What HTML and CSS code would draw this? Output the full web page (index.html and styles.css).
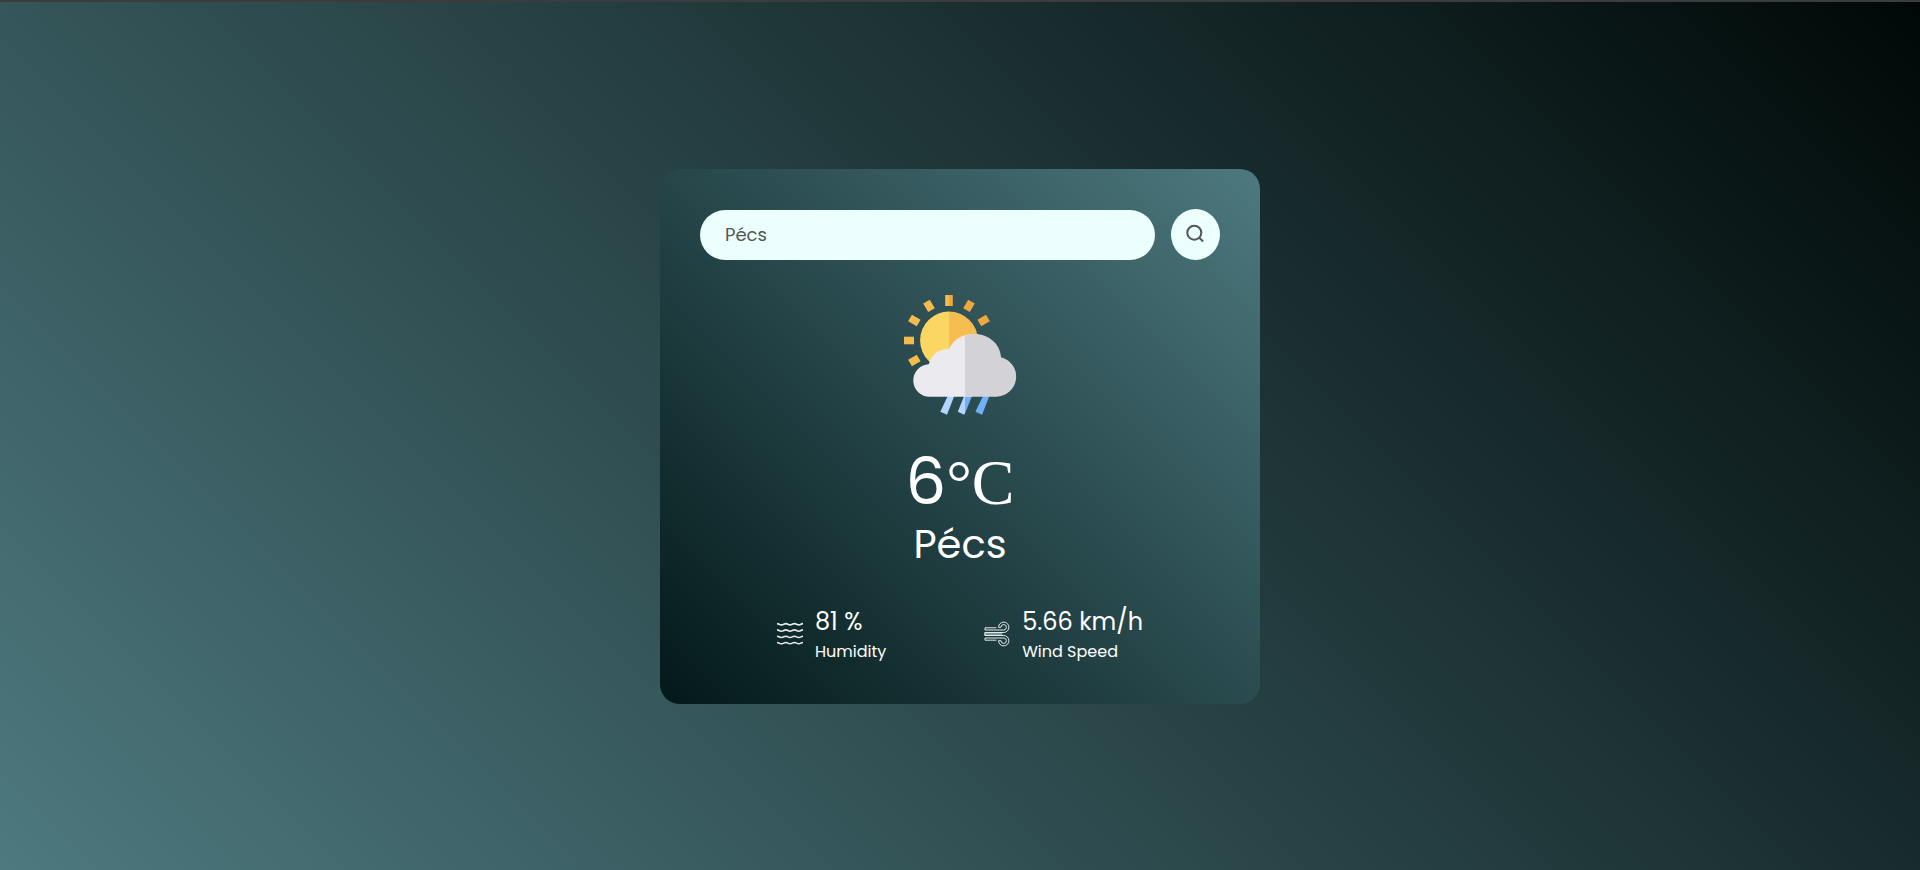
FILE: index.html
```html
<!DOCTYPE html>
<html lang="en">
<head>
<meta charset="utf-8">
<meta name="viewport" content="width=device-width, initial-scale=1">
<title>Weather</title>
<link rel="stylesheet" href="styles.css">
</head>
<body>
<main class="card">
  <form class="search">
    <input class="search-input" type="text" value="Pécs" aria-label="City name" spellcheck="false">
    <button class="search-button" type="button" aria-label="Search">
      <svg class="search-icon" viewBox="0 0 18 18" aria-hidden="true"><circle cx="7.300" cy="7.700" r="7"/><path d="M12.300 12.700l3.800 3.800"/></svg>
    </button>
  </form>
  <section class="weather">
    <svg class="weather-icon" viewBox="0 0 120 120" role="img" aria-label="Sun, cloud and rain">
      <g fill="#f5bb4f">
        <path d="M45.200 0H49V11H45.200z"/>
        <path id="ray" d="M4 41.700h10v7.600H4z"/>
        <use href="#ray" transform="rotate(-30 49 45.500)"/>
        <use href="#ray" transform="rotate(30 49 45.500)"/>
        <use href="#ray" transform="rotate(60 49 45.500)"/>
      </g>
      <g fill="#f0a73e">
        <path d="M49 0h3.800v11H49z"/>
        <path d="M4 41.700h10v7.600H4z" transform="rotate(120 49 45.500)"/>
        <path d="M4 41.700h10v7.600H4z" transform="rotate(150 49 45.500)"/>
      </g>
      <path fill="#fbd662" d="M49 16.500a28.900 28.900 0 0 0 0 57.800z"/>
      <path fill="#f6bd50" d="M49 16.500a28.900 28.900 0 0 1 0 57.800z"/>
      <path fill="#b3d4fd" d="M47.700 101h6.600l-7.300 18.700-6.700-3zM64.100 101h.9v17l-.8 1.700-6.400-3z"/>
      <path fill="#70affb" d="M65 101h7l-7 17.500zM83 101h6.400l-7.300 18.700-6.700-3z"/>
      <path fill="#ebebef" d="M30.200 101.700A16.200 16.200 0 0 1 28.800 69.300C31 59.500 39 53.800 49 54 53.500 45 62 39.300 72 39.300V101.700z"/>
      <path fill="#d3d2d7" d="M65 40.900C82 34.500 100.500 46 101 62.300A20 20 0 0 1 96.300 101.700H65z"/>
    </svg>
    <h1 class="temperature">6<span class="unit">°C</span></h1>
    <h2 class="city">Pécs</h2>
  </section>
  <section class="details">
    <div class="detail">
      <svg class="detail-icon" viewBox="0 0 26 26" aria-hidden="true">
        <g fill="none" stroke="#e6eaea" stroke-width="1.600">
          <path id="wave" d="M0 2.600C2 2.600 2 3.900 4.400 3.900S6.800 2.600 8.800 2.600 11 3.900 13 3.900 15.400 2.600 17.400 2.600 19.800 3.900 21.800 3.900 24 2.600 26 2.600"/>
          <use href="#wave" y="6.300"/><use href="#wave" y="12.600"/><use href="#wave" y="18.900"/>
        </g>
      </svg>
      <div>
        <p class="value">81 %</p>
        <p class="label">Humidity</p>
      </div>
    </div>
    <div class="detail">
      <svg class="detail-icon" viewBox="0 0 26 26" aria-hidden="true">
        <g fill="none" stroke="#e4eaea" stroke-width="1" stroke-linecap="round" stroke-linejoin="round">
          <path d="M12 6.800H1V9H19.700A2.700 2.700 0 1 0 17 6.300H14.500A5.200 5.200 0 1 1 19.700 11.500H.8V14.500H19.700A5.200 5.200 0 1 1 14.500 19.700H17A2.700 2.700 0 1 0 19.700 17H1V19.200H12M.8 13H18"/>
        </g>
      </svg>
      <div>
        <p class="value">5.66 km/h</p>
        <p class="label">Wind Speed</p>
      </div>
    </div>
  </section>
</main>
</body>
</html>
```
FILE: styles.css
```css
* {
  box-sizing: border-box;
  margin: 0;
  padding: 0;
}

body {
  min-height: 100vh;
  display: flex;
  align-items: center;
  justify-content: center;
  border-top: 2px solid #3d3c3d;
  background: linear-gradient(45deg, #4d797f, #000807);
  background-origin: border-box;
  color: #fff;
  font-family: Poppins, Inter, "Open Sans", sans-serif;
}

.card {
  width: 100%;
  max-width: 600px;
  padding: 40px;
  border-radius: 20px;
  background: linear-gradient(45deg, #031819, #4d797f);
}

.search {
  display: flex;
  align-items: flex-end;
  gap: 16px;
}

.search-input {
  flex: 1;
  min-width: 0;
  height: 50px;
  padding: 0 25px;
  border: 0;
  border-radius: 25px;
  outline: 0;
  background: #ebfffc;
  color: #555;
  font: inherit;
  font-size: 18px;
}

.search-button {
  display: flex;
  align-items: center;
  justify-content: center;
  width: 49px;
  height: 51px;
  border: 0;
  border-radius: 50%;
  background: #ebfffc;
  cursor: pointer;
}

.search-icon {
  width: 18px;
  height: 18px;
  fill: none;
  stroke: #555;
  stroke-width: 2;
  overflow: visible;
}

.weather {
  display: flex;
  flex-direction: column;
  align-items: center;
  margin-top: 35px;
}

.weather-icon {
  width: 120px;
  height: 120px;
  margin-bottom: 30px;
}

.temperature {
  font-size: 64px;
  font-weight: 400;
  line-height: 74px;
}

.unit {
  font-family: "Liberation Serif", serif;
}

.city {
  font-size: 40px;
  font-weight: 400;
  line-height: 48px;
}

.details {
  display: flex;
  justify-content: center;
  gap: 98px;
  margin-top: 36px;
}

.detail {
  display: flex;
  align-items: center;
  gap: 12px;
}

.detail-icon {
  width: 26px;
  height: 26px;
}

.value {
  font-size: 24px;
  line-height: 36px;
}

.label {
  font-size: 16px;
  line-height: 24px;
}
```
